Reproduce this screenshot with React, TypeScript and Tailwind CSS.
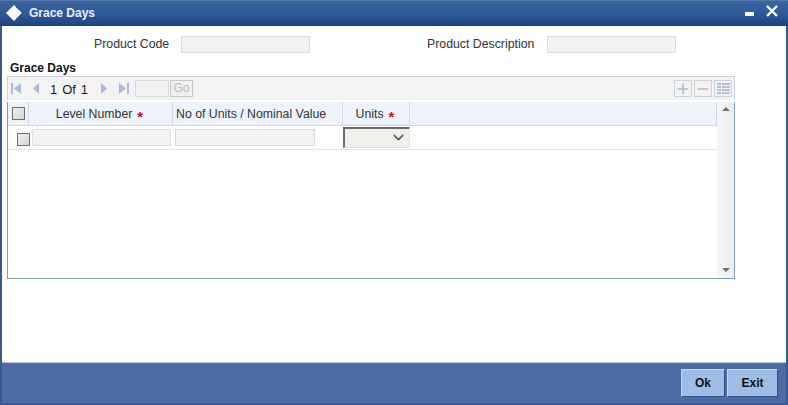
import { ChevronDown, Minus, Plus } from "lucide-react";

const font = { fontFamily: '"Liberation Sans", Arial, sans-serif' };

function Star() {
  return <span className="ml-[5px] text-[15px] leading-none mt-[4px] font-bold text-[#c8102e]">*</span>;
}

function GreyBox({ className }: { className: string }) {
  return <div className={`bg-[#f2f2f2] border border-[#dcdcdc] ${className}`} />;
}

function Check({ className }: { className: string }) {
  return (
    <div
      className={`w-[13px] h-[13px] border border-[#6e6e6e] bg-gradient-to-br from-[#f0f0f0] to-[#d4d4d4] ${className}`}
    />
  );
}

function Pager() {
  return (
    <div className="flex items-center h-full pl-[3px] text-[13px] text-[#1a1a1a]">
      <svg width="10" height="11" viewBox="0 0 10 11" className="fill-[#a9b9d6]">
        <rect x="0" y="0" width="2" height="11" />
        <path d="M10 0v11L3 5.5z" />
      </svg>
      <svg width="7" height="11" viewBox="0 0 7 11" className="ml-[12px] fill-[#a9b9d6]">
        <path d="M6 0v11L0 5.5z" />
      </svg>
      <span className="ml-[10px] w-[38px] flex justify-between pt-[2px]">
        <span>1</span>
        <span>Of</span>
        <span>1</span>
      </span>
      <svg width="7" height="11" viewBox="0 0 7 11" className="ml-[13px] fill-[#a9b9d6]">
        <path d="M0 0v11l6-5.5z" />
      </svg>
      <svg width="10" height="11" viewBox="0 0 10 11" className="ml-[11px] fill-[#a9b9d6]">
        <path d="M0 0v11l7-5.5z" />
        <rect x="8" y="0" width="2" height="11" />
      </svg>
      <GreyBox className="ml-[6px] w-[34px] h-[17px]" />
      <div className="ml-[1px] w-[23px] h-[17px] border border-[#c8c8c8] bg-[#f0f0f0] text-[#bcbcbc] text-[12px] leading-[15px] text-center">
        Go
      </div>
    </div>
  );
}

function ToolButton({ children }: { children: React.ReactNode }) {
  return (
    <div className="w-[18px] h-[17px] border border-[#ccd3de] bg-[#f3f3f3] flex items-center justify-center">
      {children}
    </div>
  );
}

export default function App() {
  return (
    <div
      className="w-[788px] h-[405px] flex flex-col bg-[#36598f] px-[2px] pb-[2px] overflow-hidden"
      style={font}
    >
      <div className="-mx-[2px] h-[26px] shrink-0 flex items-center bg-gradient-to-b from-[#3a649f] via-[#2f5a9a] to-[#1f4580] border-t border-[#5577a8] border-b-[#1a3a70] border-b">
        <svg width="18" height="18" viewBox="0 0 18 18" className="ml-[6px]">
          <path d="M9.5 1.5l7.5 7.5-7.5 7.5z" fill="#16305c" />
          <path d="M8 1l8 8-8 8-8-8z" fill="#ffffff" />
        </svg>
        <span className="ml-[5px] text-[12px] font-bold text-[#e8eef8]">Grace Days</span>
        <div className="ml-auto flex items-start h-full">
          <svg width="9" height="4" viewBox="0 0 9 4" className="mt-[11px] fill-white">
            <rect width="9" height="4" />
          </svg>
          <svg width="12" height="12" viewBox="0 0 12 12" className="ml-[12px] mt-[4px] mr-[10px]">
            <path d="M1 1l10 10M11 1L1 11" stroke="#ffffff" strokeWidth="2.4" fill="none" />
          </svg>
        </div>
      </div>

      <div className="flex-1 bg-white flex flex-col text-[#333333] text-[12.3px] min-h-0">
        <div className="flex items-center h-[18px] mt-[9px] shrink-0">
          <span className="ml-[92px] w-[87px]">Product Code</span>
          <GreyBox className="w-[129px] h-[17px]" />
          <span className="ml-[117px] w-[120px]">Product Description</span>
          <GreyBox className="w-[129px] h-[17px]" />
        </div>

        <div className="ml-[8px] mt-[8px] h-[15px] shrink-0 text-[12px] leading-[15px] font-bold text-[#111111]">
          Grace Days
        </div>

        <div className="mx-[5px] w-[728px] h-[24px] shrink-0 bg-[#f3f3f3] border-t border-l border-r border-[#ccd3de] flex items-center justify-between">
          <Pager />
          <div className="flex items-center gap-[2px] pr-[2px]">
            <ToolButton>
              <Plus size={16} strokeWidth={2.5} className="text-[#a9b9d6]" />
            </ToolButton>
            <ToolButton>
              <Minus size={16} strokeWidth={2.5} className="text-[#e0a8a8]" />
            </ToolButton>
            <ToolButton>
              <svg width="13" height="12" viewBox="0 0 13 12" className="fill-[#b4bfd0]">
                <rect x="0" y="0" width="4" height="2" />
                <rect x="5" y="0" width="8" height="2" />
                <rect x="0" y="3" width="4" height="2" />
                <rect x="5" y="3" width="8" height="2" />
                <rect x="0" y="6" width="4" height="2" />
                <rect x="5" y="6" width="8" height="2" />
                <rect x="0" y="9" width="4" height="2" />
                <rect x="5" y="9" width="8" height="2" />
              </svg>
            </ToolButton>
          </div>
        </div>

        <div className="mx-[5px] w-[728px] mt-[2px] h-[177px] shrink-0 border-l border-r border-b border-[#7f9dbd] flex">
          <div className="flex-1 flex flex-col min-w-0">
            <div className="h-[24px] shrink-0 flex bg-[#eef2fb] border-b border-[#d2d9e6] text-[#333333] w-[709px] border-r">
              <div className="w-[21px] border-r border-[#d2d9e6] flex items-center justify-center">
                <Check className="" />
              </div>
              <div className="w-[144px] pt-[2px] pr-[2px] border-r border-[#d2d9e6] flex items-center justify-center">
                Level Number
                <Star />
              </div>
              <div className="w-[170px] pt-[2px] border-r border-[#d2d9e6] flex items-center pl-[3px]">
                No of Units / Nominal Value
              </div>
              <div className="w-[67px] pt-[2px] pr-[2px] border-r border-[#d2d9e6] flex items-center justify-center">
                Units
                <Star />
              </div>
            </div>
            <div className="h-[24px] shrink-0 flex items-center border-b border-[#e2e5ea] relative">
              <div className="absolute left-[29px] top-0 h-[3px] w-px bg-[#e2e5ea]" />
              <Check className="ml-[9px] mt-[3px]" />
              <GreyBox className="ml-[2px] w-[139px] h-[17px]" />
              <GreyBox className="ml-[4px] w-[140px] h-[17px]" />
              <div className="ml-[28px] w-[67px] h-[21px] -mt-[1px] bg-[#f0efea] border-l-2 border-t-2 border-[#6b6b6b] border-r border-b border-r-[#e3e3e3] border-b-[#e3e3e3] flex items-center justify-end pr-[2px]">
                <ChevronDown size={17} strokeWidth={2} className="text-[#555555]" />
              </div>
            </div>
          </div>
          <div className="w-[17px] shrink-0 bg-gradient-to-r from-[#f6f6f6] to-[#ececec] flex flex-col items-center justify-between pt-[5px] pb-[6px]">
            <div className="w-0 h-0 border-x-[4px] border-x-transparent border-b-[4px] border-b-[#6f6f6f]" />
            <div className="w-0 h-0 border-x-[4px] border-x-transparent border-t-[4px] border-t-[#6f6f6f]" />
          </div>
        </div>

        <div className="flex-1" />

        <div className="h-[41px] shrink-0 bg-[#4a6ba3] border-t border-[#b7c6de] flex items-start pt-[6px] justify-end pr-[8px] gap-[2px] text-[12px] font-bold text-[#111111]">
          <div className="w-[44px] h-[28px] bg-[#a0bde5] border border-[#2f4f80] border-l-[#c7d7ee] border-t-[#c7d7ee] flex items-center justify-center">
            Ok
          </div>
          <div className="w-[51px] h-[28px] bg-[#a0bde5] border border-[#2f4f80] border-l-[#c7d7ee] border-t-[#c7d7ee] flex items-center justify-center">
            Exit
          </div>
        </div>
      </div>
    </div>
  );
}
